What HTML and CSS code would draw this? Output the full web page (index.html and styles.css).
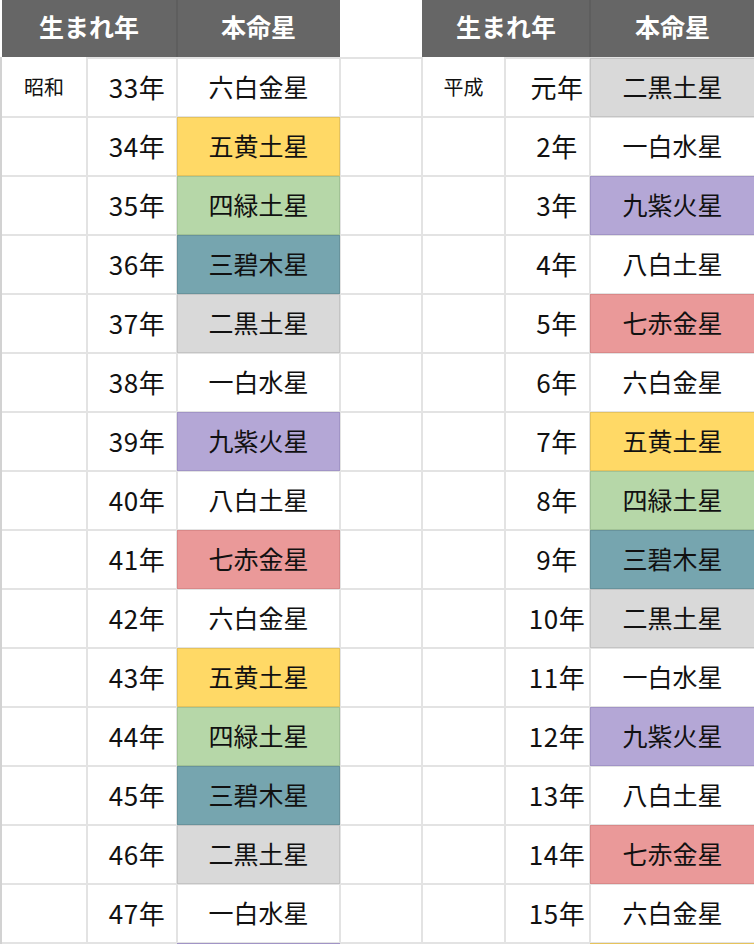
FILE: index.html
```html
<!DOCTYPE html>
<html lang="ja">
<head>
<meta charset="utf-8">
<title>本命星早見表</title>
<link rel="stylesheet" href="styles.css">
</head>
<body>
<div class="sheet">
  <div class="hd hd-year">生まれ年</div>
  <div class="hd hd-star">本命星</div>
  <div class="hd-gap"></div>
  <div class="hd hd-year hd-right">生まれ年</div>
  <div class="hd hd-star">本命星</div>

  <div class="era first">昭和</div><div class="yr">33年</div><div class="st">六白金星</div><div class="sp"></div><div class="era first">平成</div><div class="yr r">元年</div><div class="st c-gray">二黒土星</div>
  <div class="era"></div><div class="yr">34年</div><div class="st c-yellow">五黄土星</div><div class="sp"></div><div class="era"></div><div class="yr r">2年</div><div class="st">一白水星</div>
  <div class="era"></div><div class="yr">35年</div><div class="st c-green">四緑土星</div><div class="sp"></div><div class="era"></div><div class="yr r">3年</div><div class="st c-purple">九紫火星</div>
  <div class="era"></div><div class="yr">36年</div><div class="st c-teal">三碧木星</div><div class="sp"></div><div class="era"></div><div class="yr r">4年</div><div class="st">八白土星</div>
  <div class="era"></div><div class="yr">37年</div><div class="st c-gray">二黒土星</div><div class="sp"></div><div class="era"></div><div class="yr r">5年</div><div class="st c-pink">七赤金星</div>
  <div class="era"></div><div class="yr">38年</div><div class="st">一白水星</div><div class="sp"></div><div class="era"></div><div class="yr r">6年</div><div class="st">六白金星</div>
  <div class="era"></div><div class="yr">39年</div><div class="st c-purple">九紫火星</div><div class="sp"></div><div class="era"></div><div class="yr r">7年</div><div class="st c-yellow">五黄土星</div>
  <div class="era"></div><div class="yr">40年</div><div class="st">八白土星</div><div class="sp"></div><div class="era"></div><div class="yr r">8年</div><div class="st c-green">四緑土星</div>
  <div class="era"></div><div class="yr">41年</div><div class="st c-pink">七赤金星</div><div class="sp"></div><div class="era"></div><div class="yr r">9年</div><div class="st c-teal">三碧木星</div>
  <div class="era"></div><div class="yr">42年</div><div class="st">六白金星</div><div class="sp"></div><div class="era"></div><div class="yr r">10年</div><div class="st c-gray">二黒土星</div>
  <div class="era"></div><div class="yr">43年</div><div class="st c-yellow">五黄土星</div><div class="sp"></div><div class="era"></div><div class="yr r">11年</div><div class="st">一白水星</div>
  <div class="era"></div><div class="yr">44年</div><div class="st c-green">四緑土星</div><div class="sp"></div><div class="era"></div><div class="yr r">12年</div><div class="st c-purple">九紫火星</div>
  <div class="era"></div><div class="yr">45年</div><div class="st c-teal">三碧木星</div><div class="sp"></div><div class="era"></div><div class="yr r">13年</div><div class="st">八白土星</div>
  <div class="era"></div><div class="yr">46年</div><div class="st c-gray">二黒土星</div><div class="sp"></div><div class="era"></div><div class="yr r">14年</div><div class="st c-pink">七赤金星</div>
  <div class="era"></div><div class="yr">47年</div><div class="st">一白水星</div><div class="sp"></div><div class="era"></div><div class="yr r">15年</div><div class="st">六白金星</div>
  <div class="era"></div><div class="yr"></div><div class="st c-purple"></div><div class="sp"></div><div class="era"></div><div class="yr r"></div><div class="st c-yellow"></div>
</div>
</body>
</html>
```

FILE: styles.css
```css
html, body {
  margin: 0;
  padding: 0;
  background: #fff;
  overflow: hidden;
}

body {
  width: 754px;
  height: 944px;
  font-family: "Noto Sans CJK JP", "Noto Sans", sans-serif;
  color: #111;
}

.sheet {
  display: grid;
  grid-template-columns: 84px 88px 161px 80px 81px 83px 163px;
  grid-auto-rows: 57px;
  gap: 2px;
  background: #e3e3e3;
  border-left: 2px solid #d2d2d2;
  width: max-content;
}

.sheet > div {
  display: flex;
  align-items: center;
  justify-content: center;
  background: #fff;
  white-space: nowrap;
  box-sizing: border-box;
  padding-bottom: 3px;
}

.hd {
  background: #666666 !important;
  color: #fff;
  font-weight: 700;
  font-size: 25px;
  position: relative;
  z-index: 2;
  padding-bottom: 5px !important;
}

.hd-year {
  grid-column: span 2;
  box-shadow: 2px 0 0 #5e5e5e;
}

.sheet > .hd-year:first-child {
  box-shadow: 2px 0 0 #5e5e5e, -2px 0 0 #fff;
}

.hd-star {
  box-shadow: 1px 0 0 #666;
}

.hd-right {
  box-shadow: 2px 0 0 #5e5e5e, -1px 0 0 #666;
}

.hd-gap {
  position: relative;
  z-index: 1;
  box-shadow: -1px 0 0 #fff, 1px 0 0 #fff;
}

.era {
  font-size: 20px;
}

.era.first {
  box-shadow: 0 -2px 0 #fff;
  position: relative;
  z-index: 1;
}

.yr {
  font-size: 26px;
  padding-left: 10px;
  letter-spacing: 0.5px;
}

.yr.r {
  padding-left: 19px;
}

.st {
  font-size: 25px;
}

.st[class*="c-"] {
  margin: -1px;
  position: relative;
  z-index: 1;
  border: 1px solid;
}

.sheet > .c-yellow { background: #ffd966; border-color: #e6c35c; }
.sheet > .c-green  { background: #b6d7a8; border-color: #a1c295; }
.sheet > .c-teal   { background: #76a5af; border-color: #68939c; }
.sheet > .c-gray   { background: #d9d9d9; border-color: #c4c4c4; }
.sheet > .c-purple { background: #b4a7d6; border-color: #a194c6; }
.sheet > .c-pink   { background: #ea9999; border-color: #d98888; }
```
